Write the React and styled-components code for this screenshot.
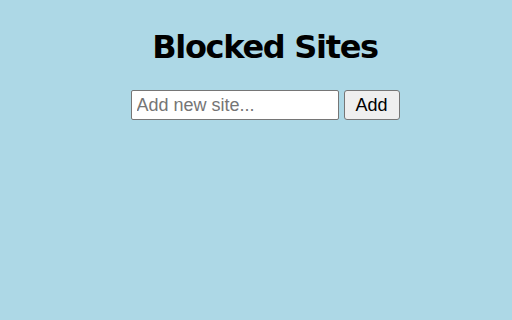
import React, { useState } from 'react';
import styled, { createGlobalStyle } from 'styled-components';

const GlobalStyle = createGlobalStyle`
  html, body {
    margin: 0;
    padding: 0;
    background: #add8e6;
  }
  body {
    font-family: "Liberation Sans", Arial, sans-serif;
  }
`;

const Page = styled.div`
  min-height: 320px;
  box-sizing: border-box;
  padding: 28px 0 0 18px;
  text-align: center;
`;

const Title = styled.h1`
  margin: 0 0 24px;
  font-family: "DejaVu Sans", Verdana, sans-serif;
  font-size: 32px;
  font-weight: bold;
  letter-spacing: -1.3px;
  color: #000;
`;

const Form = styled.form`
  display: flex;
  justify-content: center;
  align-items: center;
  gap: 5px;
`;

const SiteInput = styled.input`
  box-sizing: border-box;
  width: 208px;
  height: 30px;
  padding: 0 5px;
  font-family: "Liberation Sans", Arial, sans-serif;
  font-size: 18px;
  color: #000;
  background: #fff;
  border: 1px solid #767676;
  border-radius: 2px;
  outline: none;

  &::placeholder {
    color: #757575;
  }
`;

const AddButton = styled.button`
  box-sizing: border-box;
  width: 56px;
  height: 30px;
  padding: 0;
  font-family: "Liberation Sans", Arial, sans-serif;
  font-size: 18px;
  color: #000;
  background: #efefef;
  border: 1px solid #767676;
  border-radius: 3px;
  cursor: pointer;
`;

const SiteList = styled.ul`
  list-style: none;
  margin: 12px 0 0;
  padding: 0;
  font-size: 16px;
`;

export default function App() {
  const [site, setSite] = useState('');
  const [sites, setSites] = useState([]);

  const addSite = (e) => {
    e.preventDefault();
    if (!site.trim()) return;
    setSites([...sites, site.trim()]);
    setSite('');
  };

  return (
    <>
      <GlobalStyle />
      <Page>
        <Title>Blocked Sites</Title>
        <Form onSubmit={addSite}>
          <SiteInput
            type="text"
            placeholder="Add new site..."
            value={site}
            onChange={(e) => setSite(e.target.value)}
          />
          <AddButton type="submit">Add</AddButton>
        </Form>
        {sites.length > 0 && (
          <SiteList>
            {sites.map((s) => (
              <li key={s}>{s}</li>
            ))}
          </SiteList>
        )}
      </Page>
    </>
  );
}
